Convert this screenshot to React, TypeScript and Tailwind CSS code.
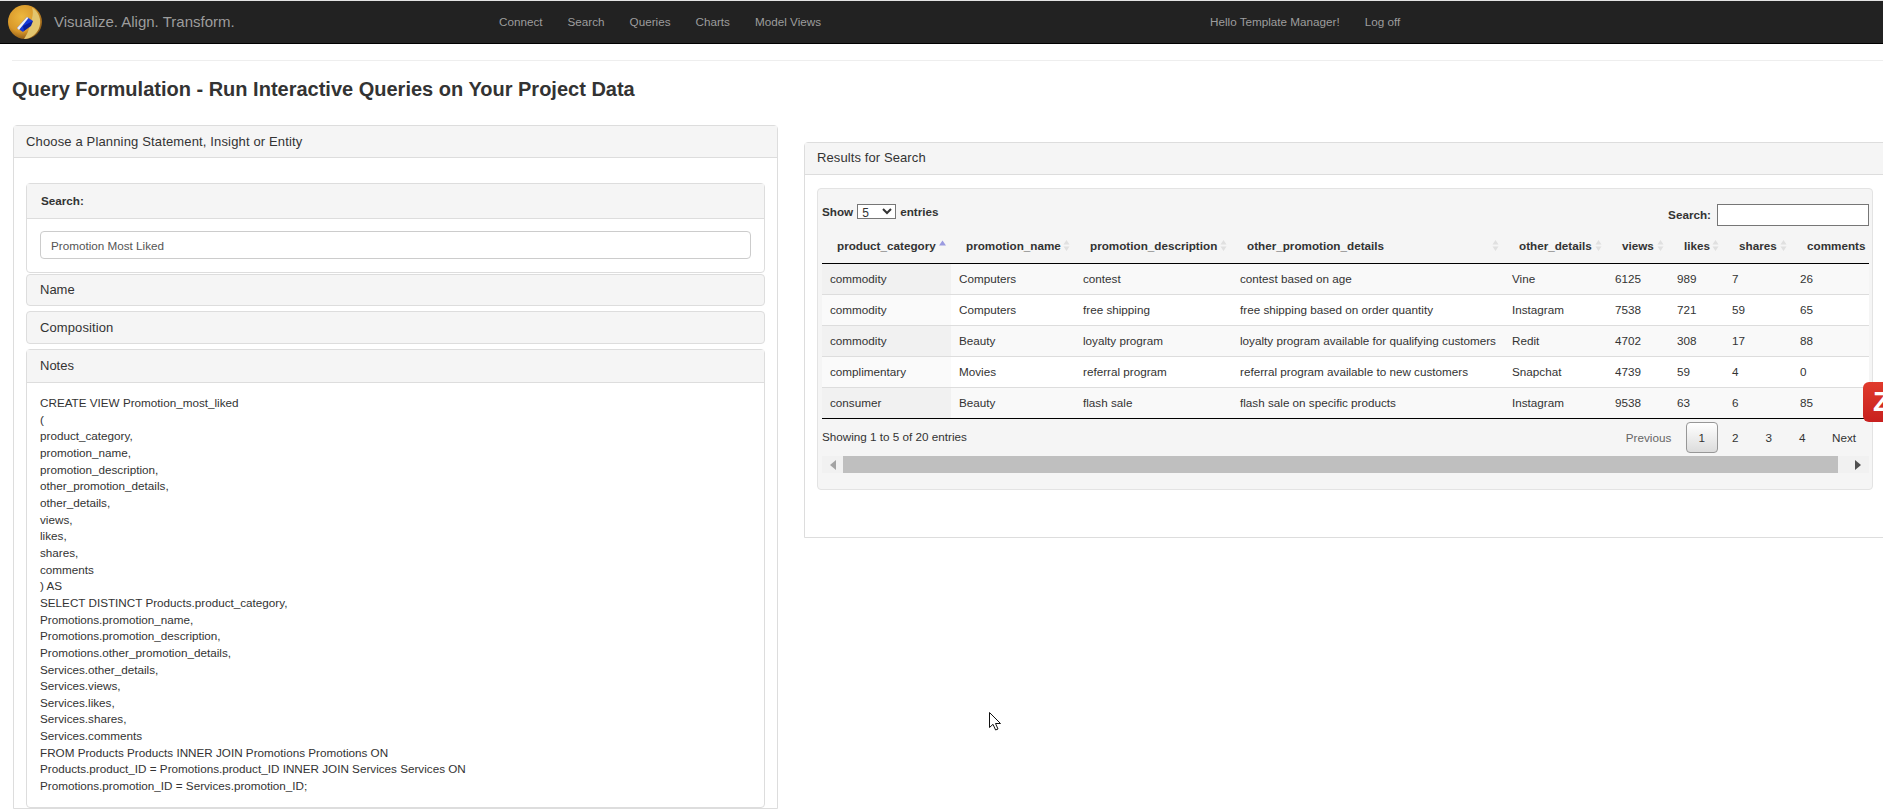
import React from 'react';

const navLinks = ['Connect', 'Search', 'Queries', 'Charts', 'Model Views'];

const columns = [
  { key: 'product_category', width: 'w-[129px]', sorted: true },
  { key: 'promotion_name', width: 'w-[124px]' },
  { key: 'promotion_description', width: 'w-[157px]' },
  { key: 'other_promotion_details', width: 'w-[272px]' },
  { key: 'other_details', width: 'w-[103px]' },
  { key: 'views', width: 'w-[62px]' },
  { key: 'likes', width: 'w-[55px]' },
  { key: 'shares', width: 'w-[68px]' },
  { key: 'comments', width: 'w-[77px]', noIcon: true },
];

const rows = [
  ['commodity', 'Computers', 'contest', 'contest based on age', 'Vine', '6125', '989', '7', '26'],
  ['commodity', 'Computers', 'free shipping', 'free shipping based on order quantity', 'Instagram', '7538', '721', '59', '65'],
  ['commodity', 'Beauty', 'loyalty program', 'loyalty program available for qualifying customers', 'Redit', '4702', '308', '17', '88'],
  ['complimentary', 'Movies', 'referral program', 'referral program available to new customers', 'Snapchat', '4739', '59', '4', '0'],
  ['consumer', 'Beauty', 'flash sale', 'flash sale on specific products', 'Instagram', '9538', '63', '6', '85'],
];

const sqlLines = [
  'CREATE VIEW Promotion_most_liked',
  '(',
  'product_category,',
  'promotion_name,',
  'promotion_description,',
  'other_promotion_details,',
  'other_details,',
  'views,',
  'likes,',
  'shares,',
  'comments',
  ') AS',
  'SELECT DISTINCT Products.product_category,',
  'Promotions.promotion_name,',
  'Promotions.promotion_description,',
  'Promotions.other_promotion_details,',
  'Services.other_details,',
  'Services.views,',
  'Services.likes,',
  'Services.shares,',
  'Services.comments',
  'FROM Products Products INNER JOIN Promotions Promotions ON',
  'Products.product_ID = Promotions.product_ID INNER JOIN Services Services ON',
  'Promotions.promotion_ID = Services.promotion_ID;',
];

function Logo() {
  return (
    <svg width="34" height="34" viewBox="0 0 34 34" className="shrink-0">
      <defs>
        <radialGradient id="gold" cx="40%" cy="35%" r="72%">
          <stop offset="0%" stopColor="#edb83f" />
          <stop offset="60%" stopColor="#d9982a" />
          <stop offset="100%" stopColor="#7a4c14" />
        </radialGradient>
      </defs>
      <circle cx="17" cy="17" r="17" fill="url(#gold)" />
      <path d="M24 2.5 A17 17 0 0 1 16 34 C20 28 21 24 22 20 C24 14 26 8 24 2.5 Z" fill="#e3c56e" />
      <path d="M9 23 L19 12 L25 16 L15 27 Z" fill="#1538d8" />
      <path d="M9 23 L19 12 L20.5 13 L11 25 Z" fill="#f0f0f0" />
      <path d="M15 21 L25 16 L23 21 L16 26 Z" fill="#0b1f9a" />
    </svg>
  );
}

function SortIcon({ sorted }: { sorted?: boolean }) {
  if (sorted) {
    return (
      <svg width="7" height="11" viewBox="0 0 7 11" className="shrink-0">
        <path d="M3.5 0.5 L7 5.5 H0 Z" fill="#9a9ae0" />
      </svg>
    );
  }
  return (
    <svg width="7" height="11" viewBox="0 0 7 11" className="shrink-0">
      <path d="M3.5 0 L6.5 4.6 H0.5 Z M3.5 11 L0.5 6.4 H6.5 Z" fill="#e0e0e0" />
    </svg>
  );
}

function Cursor() {
  return (
    <svg width="13" height="19" viewBox="0 0 13 19" className="absolute left-[989px] top-[712px]">
      <path
        d="M0.5 0.5 V15.5 L4 12.3 L6.6 18 L9 17 L6.5 11.5 H11.5 Z"
        fill="#fff"
        stroke="#111"
        strokeWidth="1"
      />
    </svg>
  );
}

export default function App() {
  return (
    <div className="relative h-[809px] w-full overflow-hidden bg-white font-['Liberation_Sans',Arial,sans-serif] text-[11.7px] text-[#333]">
      {/* top bar */}
      <nav className="flex h-[44px] items-center border-t border-b border-t-[#e4e4e4] border-b-black bg-[#222] text-[#9d9d9d]">
        <div className="flex w-[499px] items-center pl-[8px]">
          <Logo />
          <span className="ml-[12px] text-[15px]">Visualize. Align. Transform.</span>
        </div>
        <div className="flex w-[711px] gap-[25px]">
          {navLinks.map((link) => (
            <span key={link}>{link}</span>
          ))}
        </div>
        <div className="flex gap-[25px]">
          <span>Hello Template Manager!</span>
          <span>Log off</span>
        </div>
      </nav>

      <div className="ml-[12px] mt-[16px] border-t border-[#eee]" />

      <h1 className="ml-[12px] mt-[16px] text-[20px] font-bold leading-[24px]">
        Query Formulation - Run Interactive Queries on Your Project Data
      </h1>

      <div className="mt-[24px] flex items-start pl-[13px]">
        {/* left panel */}
        <div className="w-[765px] shrink-0 rounded-t border border-[#ddd]">
          <div className="flex h-[32px] items-center border-b border-[#ddd] bg-[#f5f5f5] px-[12px] text-[13px] tracking-[0.15px]">
            Choose a Planning Statement, Insight or Entity
          </div>
          <div className="px-[12px] pt-[25px]">
            <div className="h-[90px] rounded border border-[#ddd]">
              <div className="flex h-[35px] items-center border-b border-[#ddd] bg-[#f5f5f5] px-[14px] font-bold">
                Search:
              </div>
              <div className="px-[13px] pt-[12px]">
                <input
                  readOnly
                  value="Promotion Most Liked"
                  className="h-[28px] w-full rounded border border-[#ccc] bg-white px-[10px] pt-[1px] text-[11.7px] text-[#555] outline-none"
                />
              </div>
            </div>
            <div className="mt-[1px] flex h-[32px] items-center rounded border border-[#ddd] bg-[#f5f5f5] px-[13px] text-[13px]">
              Name
            </div>
            <div className="mt-[5px] flex h-[33px] items-center rounded border border-[#ddd] bg-[#f5f5f5] px-[13px] text-[13px] tracking-[0.1px]">
              Composition
            </div>
            <div className="mt-[5px] rounded border border-[#ddd]">
              <div className="flex h-[33px] items-center border-b border-[#ddd] bg-[#f5f5f5] px-[13px] pb-[1px] text-[13px]">
                Notes
              </div>
              <div className="px-[13px] pb-[12px] pt-[12px] leading-[16.65px]">
                {sqlLines.map((line, i) => (
                  <div key={i}>{line}</div>
                ))}
              </div>
            </div>
          </div>
        </div>

        {/* right panel */}
        <div className="ml-[26px] mt-[17px] w-[1100px] shrink-0 rounded-t border border-[#ddd] pb-[47px]">
          <div className="flex h-[32px] items-center border-b border-[#ddd] bg-[#f5f5f5] px-[12px] pb-[1px] text-[13px] tracking-[0.1px]">
            Results for Search
          </div>
          <div className="ml-[12px] mt-[13px] w-[1056px] rounded border border-[#e3e3e3] bg-[#f5f5f5] pb-[16px] pl-[4px] pr-[3px] pt-[15px]">
            <div className="flex h-[23px] w-[1047px] items-start justify-between">
              <div className="flex h-[15px] items-center font-bold">
                Show
                <select className="mx-[4px] h-[15px] w-[39px] border border-[#767676] bg-white text-[12px] font-normal">
                  <option>5</option>
                </select>
                <span>entries</span>
              </div>
              <div className="flex items-center font-bold">
                Search:
                <input readOnly className="ml-[6px] h-[22px] w-[152px] border border-[#767676] bg-white" />
              </div>
            </div>

            <table className="w-[1047px] table-fixed border-separate border-spacing-0">
              <colgroup>
                {columns.map((c) => (
                  <col key={c.key} className={c.width} />
                ))}
              </colgroup>
              <thead>
                <tr>
                  {columns.map((c) => (
                    <th key={c.key} className="h-[37px] border-b border-black p-0 pl-[15px] pr-[5px] pt-[1px] text-left font-bold">
                      <div className="flex items-center justify-between whitespace-nowrap">
                        <span>{c.key}</span>
                        {!c.noIcon && <SortIcon sorted={c.sorted} />}
                      </div>
                    </th>
                  ))}
                </tr>
              </thead>
              <tbody>
                {rows.map((row, r) => (
                  <tr key={r} className={r % 2 === 0 ? 'bg-[#f9f9f9]' : 'bg-white'}>
                    {row.map((cell, c) => (
                      <td
                        key={c}
                        className={`h-[31px] whitespace-nowrap border-b px-[8px] py-0 ${
                          r === rows.length - 1 ? 'border-black' : 'border-[#ddd]'
                        } ${c === 0 ? (r % 2 === 0 ? 'bg-[#f1f1f1]' : 'bg-[#fafafa]') : ''}`}
                      >
                        {cell}
                      </td>
                    ))}
                  </tr>
                ))}
              </tbody>
            </table>

            <div className="flex h-[37px] w-[1047px] justify-between pt-[3px]">
              <div className="pt-[6px]">Showing 1 to 5 of 20 entries</div>
              <div className="flex h-[31px] items-center">
                <span className="w-[73px] text-center text-[#666]">Previous</span>
                <span className="mx-[1px] flex h-[31px] w-[31.5px] items-center justify-center rounded-sm border border-[#979797] bg-gradient-to-b from-white to-[#dcdcdc]">
                  1
                </span>
                <span className="w-[33.5px] text-center">2</span>
                <span className="w-[33.5px] text-center">3</span>
                <span className="w-[33.5px] text-center">4</span>
                <span className="w-[50px] text-center">Next</span>
              </div>
            </div>

            <div className="flex h-[17px] w-[1047px] items-center bg-[#f1f1f1]">
              <div className="flex w-[21px] shrink-0 justify-center">
                <svg width="6" height="10" viewBox="0 0 6 10">
                  <path d="M6 0 V10 L0 5 Z" fill="#a3a3a3" />
                </svg>
              </div>
              <div className="h-[17px] w-[995px] bg-[#bfbfbf]" />
              <div className="flex w-[31px] shrink-0 justify-center pl-[9px]">
                <svg width="6" height="10" viewBox="0 0 6 10">
                  <path d="M0 0 V10 L6 5 Z" fill="#505050" />
                </svg>
              </div>
            </div>
          </div>
        </div>
      </div>

      {/* red tab sticking out of the right edge */}
      <div className="absolute left-[1863px] top-[382px] flex h-[40px] w-[20px] items-center overflow-hidden rounded-l-[6px] bg-gradient-to-b from-[#e03a2c] to-[#c8201f] pl-[10px] text-[28px] font-bold text-white">
        Z
      </div>

      <Cursor />
    </div>
  );
}
